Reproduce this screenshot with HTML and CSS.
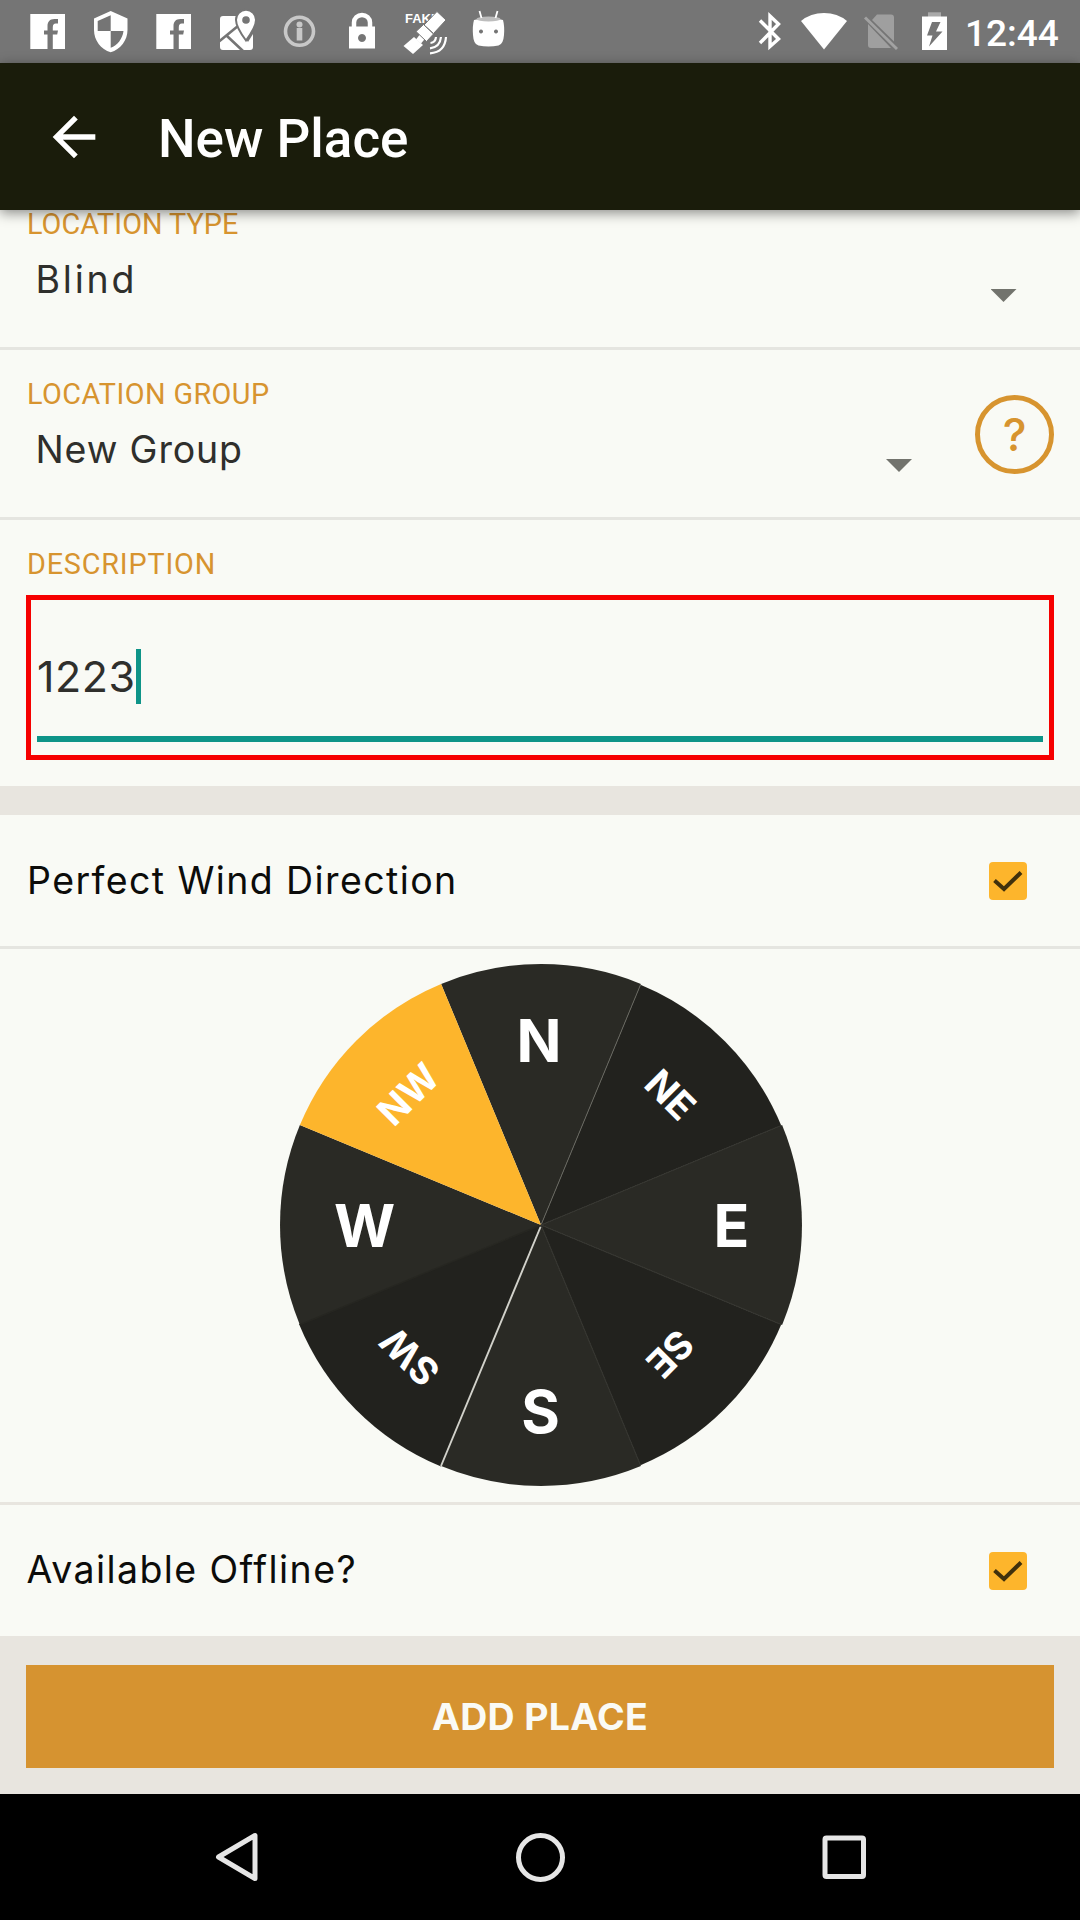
FILE: index.html
```html
<!DOCTYPE html>
<html lang="en">
<head>
<meta charset="utf-8">
<title>New Place</title>
<link rel="stylesheet" href="styles.css">
</head>
<body>
<div class="screen">
  <div class="status-bar">
    <div class="notifications">
      <svg class="slot" viewBox="0 0 63 63"><path fill="#fff" d="M14.3 14H49v35H36.8V34.6h4.4l.8-4h-5.2v-3.4c0-2.6 1-3.7 3-3.7H42V19h-3.6c-4.700 0-6.900 2.800-6.900 7v4.600H28v4h3.500V49H14.300z"/></svg>
      <svg class="slot" viewBox="0 0 63 63"><path fill="#fff" fill-rule="evenodd" d="M31.700 11l16.800 7.400V30c0 10.400-7 19.400-16.800 22.300C21.900 49.400 15 40.400 15 30V18.400zM31.700 15.200L18.700 21v10h13zM31.700 31v16.800c6.800-2.600 11.800-8.900 12.800-16.800z"/></svg>
      <svg class="slot" viewBox="0 0 63 63"><path fill="#fff" d="M14.3 14H49v35H36.8V34.6h4.4l.8-4h-5.200v-3.400c0-2.600 1-3.700 3-3.700H42V19h-3.600c-4.700 0-6.900 2.800-6.900 7v4.600H28v4h3.500V49H14.300z"/></svg>
      <svg class="slot" viewBox="0 0 63 63">
        <path fill="#fff" d="M18 16h14c-2 8 2 13 5 18l6 8 5-8v13a3 3 0 0 1-3 3H18a3 3 0 0 1-3-3V19a3 3 0 0 1 3-3z"/>
        <path fill="none" stroke="#757575" stroke-width="2.600" d="M14 41.500L33 26M22 36l16 15"/>
        <path fill="#fff" stroke="#757575" stroke-width="2" d="M41 9.800a10 10 0 0 0-10 10.200c0 7 10 20.500 10 20.500S51 27 51 20A10 10 0 0 0 41 9.800z"/>
        <circle cx="41" cy="20" r="3.800" fill="#757575"/>
      </svg>
      <svg class="slot" viewBox="0 0 63 63"><circle cx="31.500" cy="31.300" r="14" fill="none" stroke="#c8c8c8" stroke-width="3.600"/><circle cx="31.500" cy="24.500" r="3" fill="#c8c8c8"/><path fill="#c8c8c8" d="M28.700 28h5.600v12.500h-5.600z"/></svg>
      <svg class="slot" viewBox="0 0 63 63"><path fill="none" stroke="#fff" stroke-width="4.500" d="M23 28v-5.500a8 7.500 0 0 1 16 0V28"/><path fill="#fff" fill-rule="evenodd" d="M18 26.500h26V48.500H18zM31 34a4 4 0 1 0 .01 0z"/></svg>
      <svg class="slot" viewBox="0 0 63 63">
        <text class="fake-label" x="11" y="23">FAKE</text>
        <g fill="#fff">
          <path stroke="#757575" d="M43 11.500L52 20 39.500 33.500 30 25z"/><path d="M20 37l9 8-10 9-9.500-8z"/>
          <path d="M27 33l5 4.500-5 6-5-4z"/>
          <path stroke="#757575" d="M29.500 24.500L39.500 34 32.500 41.500 22 31.500z"/>
        </g>
        <path fill="none" stroke="#fff" stroke-width="2.200" d="M36.500 43q5-.5 5.500-6M36 48.300q10-1 11-11.300M36 53.300q15-1 16-16.300"/>
      </svg>
      <svg class="slot" viewBox="0 0 63 63"><path fill="#fff" fill-rule="evenodd" d="M17 20q14.500-4 29 0 1.700 6 1 15-.7 9.500-5.500 10.500-10 2-20 0-5-1-5.500-10.500-.7-9 1-15zM24 29.600a2 2 0 1 0 .01 0zM39 29.600a2 2 0 1 0 .01 0z"/><ellipse cx="31.500" cy="19" rx="12" ry="2.600" fill="#bdbdbd"/><path stroke="#fff" stroke-width="1.800" d="M22.500 11l2 7M40.500 11l-2 7"/></svg>
    </div>
    <div class="system">
      <svg width="28" height="63" viewBox="0 0 28 63"><path fill="none" stroke="#fff" stroke-width="3.400" d="M4 20.500l18.500 18.500-8.500 7.500V16l8.500 8L4 43"/></svg>
      <svg width="46" height="63" viewBox="0 0 46 63"><path fill="#fff" d="M23 49.500L0 21q9.500-8 23-8t23 8z"/></svg>
      <svg width="34" height="63" viewBox="0 0 34 63"><path fill="#9f9f9f" d="M13 14.500h14a3 3 0 0 1 3 3V41.500L8 20zM4 24l23 24H7a3 3 0 0 1-3-3z"/><path stroke="#a2a2a2" stroke-width="3" d="M1 17.500L33 49"/></svg>
      <svg width="25" height="63" viewBox="0 0 25 63"><path fill="#a9a9a9" d="M6 12.300h13V17H6z"/><path fill="#fff" fill-rule="evenodd" d="M0 16.500h25V50H0zM10 22L5 35.500h5.500L7 46.500l13.500-15H14L18.500 22z"/></svg>
      <span class="clock">12:44</span>
    </div>
  </div>

  <header class="app-bar">
    <svg class="back" viewBox="0 0 24 24"><path fill="#fff" d="M20 11H7.830l5.590-5.590L12 4l-8 8 8 8 1.410-1.410L7.830 13H20v-2z"/></svg>
    <h1 class="title">New Place</h1>
  </header>

  <main class="form">
    <section class="field field-type">
      <div class="field-text"><div class="label label-type">LOCATION TYPE</div><div class="value value-type">Blind</div></div>
      <span class="caret"></span>
    </section>
    <section class="field field-group">
      <div class="field-text"><div class="label label-group">LOCATION GROUP</div><div class="value value-group">New Group</div></div>
      <span class="caret"></span>
      <span class="help">?</span>
    </section>
    <section class="description">
      <div class="label label-description">DESCRIPTION</div>
      <div class="input-box"><div class="input"><span class="input-text">1223</span><span class="cursor"></span></div></div>
    </section>
    <section class="toggle">
      <span class="toggle-text">Perfect Wind Direction</span>
      <svg class="check" viewBox="0 0 38 38"><rect width="38" height="38" rx="4" fill="#fdb52c"/><path fill="none" stroke="#40300c" stroke-width="4" d="M5.500 18.500l9.500 8.500L32 10.500"/></svg>
    </section>
    <section class="wheel-area">
      <svg class="wheel" viewBox="-261 -261 522 522">
        <g fill="#22221e">
          <path d="M0 0L99.500-240.200A260 260 0 0 1 240.200-99.500z"/>
          <path d="M0 0L240.200 99.500A260 260 0 0 1 99.500 240.200z"/>
          <path d="M0 0L-100 241.500A261.400 261.400 0 0 1-242 99z"/>
        </g>
        <g fill="#2a2a25">
          <path d="M0 0L-99.900-241.100A261 261 0 0 1 99.900-241.100z"/>
          <path d="M0 0L241.100-99.900A261 261 0 0 1 241.100 99.900z"/>
          <path d="M0 0L99.900 241.100A261 261 0 0 1-99.900 241.100z"/>
          <path d="M0 0L-241.100 99.900A261 261 0 0 1-241.100-99.900z"/>
        </g>
        <path stroke="#262621" stroke-width="1.500" d="M0 0L-241 99.800"/>
        <path fill="#fdb52c" d="M0 0L-241.100-99.900A261 261 0 0 1-99.900-241.100z"/>
        <path stroke="#66665f" stroke-width="1" d="M0 0L99.500-240.200"/>
        <path stroke="#34342f" stroke-width="1.200" d="M0 0L240.200-99.500M0 0L240.200 99.500M0 0L99.500 240.200"/>
        <path stroke="#d2d2cb" stroke-width="1.900" d="M-.5 2L-100 241"/>
        <g class="cardinal">
          <text x="-2" y="-163">N</text>
          <text x="190.500" y="22">E</text>
          <text x="-.5" y="208">S</text>
          <text x="-176.500" y="22">W</text>
        </g>
        <g class="diagonal">
          <text transform="translate(-133 -131) rotate(-45)" y="14">NW</text>
          <text transform="translate(129.500 -130.500) rotate(45)" y="14">NE</text>
          <text transform="translate(129.500 129) rotate(135)" y="14">SE</text>
          <text transform="translate(-131.500 132) rotate(225)" y="14">SW</text>
        </g>
      </svg>
    </section>
    <section class="toggle toggle-offline">
      <span class="toggle-text">Available Offline?</span>
      <svg class="check" viewBox="0 0 38 38"><rect width="38" height="38" rx="4" fill="#fdb52c"/><path fill="none" stroke="#40300c" stroke-width="4" d="M5.500 18.500l9.500 8.500L32 10.500"/></svg>
    </section>
    <div class="actions"><button class="add" type="button">ADD PLACE</button></div>
  </main>

  <nav class="nav-bar">
    <svg class="nav-icon" viewBox="0 0 64 64"><path fill="none" stroke="#e6e6e6" stroke-width="5" stroke-linejoin="round" d="M51 10.500v43L14.500 32z"/></svg>
    <svg class="nav-icon" viewBox="0 0 64 64"><circle cx="32.500" cy="32.500" r="22" fill="none" stroke="#e6e6e6" stroke-width="5"/></svg>
    <svg class="nav-icon" viewBox="0 0 64 64"><rect x="13" y="13" width="38.500" height="38.500" rx="1.500" fill="none" stroke="#e6e6e6" stroke-width="5"/></svg>
  </nav>
</div>
</body>
</html>
```
FILE: styles.css
```css
* { box-sizing: border-box; }

body {
  margin: 0;
  background: #000;
  font-family: Inter, "Liberation Sans", sans-serif;
}

.screen {
  display: flex;
  flex-direction: column;
  width: 1080px;
  height: 1920px;
  overflow: hidden;
  background: #f9faf5;
}

svg { display: block; flex: none; }

/* Status bar */
.status-bar {
  display: flex;
  justify-content: space-between;
  height: 63px;
  background: #757575;
}
.notifications { display: flex; padding-left: 15.7px; }
.slot { width: 63px; height: 63px; }
.fake-label { font: 700 13px "Liberation Sans", sans-serif; fill: #fff; }
.system { display: flex; width: 324px; }
.system svg + svg { margin-left: 17px; }
.system svg:nth-child(4) { margin-left: 24px; }
.clock {
  margin-left: 18px;
  font: 500 37px/67px Roboto, sans-serif;
  color: #fff;
}

/* App bar */
.app-bar {
  display: flex;
  align-items: center;
  position: relative;
  z-index: 1;
  height: 147px;
  padding-left: 42px;
  background: #1a1c0b;
  box-shadow: 0 3px 12px rgba(0, 0, 0, .45);
}
.back { width: 64px; height: 64px; }
.title {
  margin: 4px 0 0 52px;
  font: 500 53px/64px Roboto, sans-serif;
  color: #fff;
}

/* Form fields */
.form { display: flex; flex-direction: column; height: 1584px; }
.field {
  display: flex;
  align-items: flex-start;
  flex: none;
  height: 170px;
  padding: 27px 26px 0;
  border-bottom: 3px solid #e5e5e0;
}
.field-type { margin-top: -30px; }
.field-text { flex: 1; }
.label {
  padding-left: 1px;
  font: 400 28.800px/34px Roboto, sans-serif;
  color: #d7942f;
}
.label-type { letter-spacing: 0; }
.label-group { letter-spacing: .42px; }
.label-description { letter-spacing: .8px; }
.value {
  margin-top: 16px;
  padding-left: 9.500px;
  font-size: 37.500px;
  line-height: 45px;
  color: #2f2f2c;
}
.value-type { letter-spacing: 2.800px; }
.value-group { letter-spacing: .850px; }
.caret {
  width: 26px;
  height: 13px;
  margin: 82px 37.500px 0 0;
  background: #72736d;
  clip-path: polygon(0 0, 100% 0, 50% 100%);
}
.field-group .caret { margin-right: 63px; }
.help {
  width: 79px;
  height: 79px;
  margin-top: 18px;
  border: 5px solid #d7942f;
  border-radius: 50%;
  font-size: 45px;
  font-weight: 500;
  line-height: 70px;
  text-align: center;
  color: #d7942f;
}

.description {
  flex: none;
  height: 266px;
  padding: 27px 26px 0;
}
.input-box {
  height: 165px;
  margin-top: 14px;
  padding: 0 6px 13px;
  border: 5px solid #f60000;
}
.input {
  display: flex;
  align-items: flex-start;
  height: 142px;
  padding-top: 49px;
  border-bottom: 6px solid #0e9488;
}
.input-text {
  font-size: 43px;
  line-height: 55px;
  letter-spacing: .500px;
  color: #2f2f2c;
}
.cursor { width: 5px; height: 55px; background: #0e9488; }

/* Check rows */
.toggle {
  display: flex;
  align-items: center;
  justify-content: space-between;
  flex: none;
  height: 163px;
  padding: 0 53px 0 27px;
  border-top: 29px solid #e8e5df;
  border-bottom: 3px solid #e5e5e0;
}
.toggle-offline {
  height: 134px;
  padding-left: 26.500px;
  border-top: 3px solid #e8e5df;
  border-bottom: 0;
}
.toggle-text {
  font-size: 37.500px;
  line-height: 44px;
  letter-spacing: 1.400px;
  color: #0c0c0a;
}
.toggle-offline .toggle-text { margin-top: -2px; }
.check { width: 38px; height: 38px; }

/* Wind direction */
.wheel-area {
  display: flex;
  justify-content: center;
  flex: none;
  height: 553px;
  padding: 15px 0 0 1px;
}
.wheel { width: 522px; height: 522px; overflow: visible; }
.wheel text { fill: #fff; font-weight: 700; text-anchor: middle; }
.cardinal { font-size: 59px; }
.diagonal { font-size: 38px; }

.actions {
  flex: 1;
  padding: 29px 26px 26px;
  background: #e8e5df;
}
.add {
  display: block;
  width: 100%;
  height: 103px;
  border: 0;
  padding: 0;
  background: #d69330;
  color: #fafaf5;
  font: 700 37.500px/104px Inter, sans-serif;
  letter-spacing: .3px;
}

/* Navigation bar */
.nav-bar {
  display: flex;
  justify-content: center;
  align-items: center;
  gap: 240px;
  flex: none;
  height: 126px;
  background: #000;
}
.nav-icon { width: 64px; height: 64px; }
```
